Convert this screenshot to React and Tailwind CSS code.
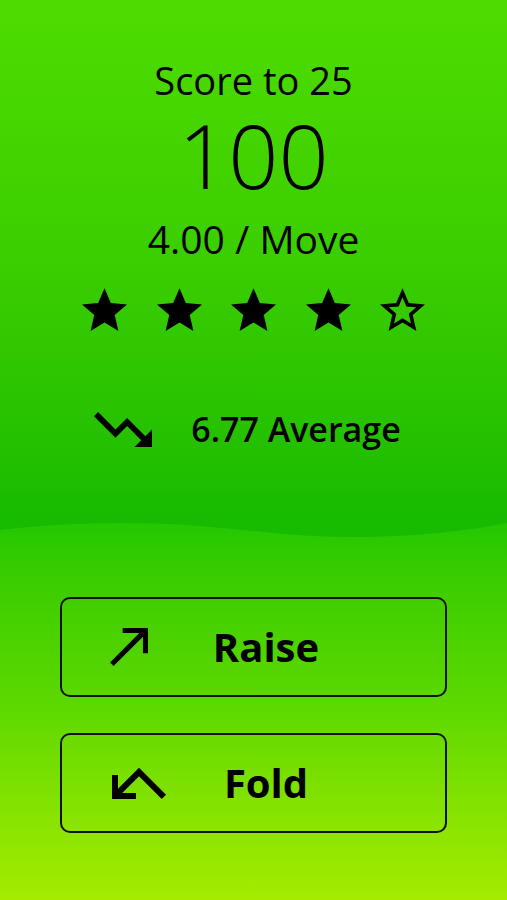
import React from 'react';

const STAR = "M12 17.27L18.18 21l-1.64-7.03L22 9.24l-7.19-.61L12 2 9.19 8.63 2 9.24l5.46 4.73L5.82 21z";
const STAR_BORDER = "M22 9.24l-7.19-.62L12 2 9.19 8.63 2 9.24l5.46 4.73L5.82 21 12 17.27 18.18 21l-1.63-7.03L22 9.24zM12 15.4l-3.76 2.27 1-4.28-3.32-2.88 4.38-.38L12 6.1l1.71 4.04 4.38.38-3.32 2.88 1 4.28L12 15.4z";

const Star = ({ filled }) => (
  <svg viewBox="2 2 20 19" className="w-[45px] h-[43px]" fill="#000">
    <path d={filled ? STAR : STAR_BORDER} />
  </svg>
);

// botones de acción
const ActionButton = ({ icon, label }) => (
  <button className="w-full h-[100px] border-2 border-[#111] rounded-[10px] flex items-center pl-[48px] pr-[83px]">
    <div className="w-[60px] flex items-center">{icon}</div>
    <span className="flex-1 text-center text-[40px] font-bold leading-[48px] text-black">{label}</span>
  </button>
);

const App = () => {
  const rating = 4;

  return (
    <div
      className="w-[507px] h-[900px] overflow-hidden flex flex-col bg-[#17bb00] text-black"
      style={{ fontFamily: '"Open Sans", "Noto Sans", sans-serif' }}
    >
      {/* PARTE SUPERIOR: puntaje */}
      <div className="h-[520px] shrink-0 bg-gradient-to-b from-[#4edc00] via-[#3bce00] to-[#17bb00] flex flex-col items-center pt-[58px]">
        <div className="text-[38px] leading-[44px]">Score to 25</div>
        <div className="mt-[9px] text-[88px] leading-[88px] font-light">100</div>
        <div className="mt-[19px] text-[39px] leading-[42px]">4.00 / Move</div>

        <div className="mt-[28px] flex gap-[29.5px]">
          {[1, 2, 3, 4, 5].map((n) => (
            <Star key={n} filled={n <= rating} />
          ))}
        </div>

        <div className="mt-[78px] w-full flex justify-center items-center gap-[39px] pr-[12px]">
          <svg viewBox="2 6 20 12" className="w-[58px] h-[35px]" fill="#000">
            <path d="M16 18l2.29-2.29-4.88-4.88-4 4L2 7.41 3.41 6l6 6 4-4 6.3 6.29L22 12v6z" />
          </svg>
          <span className="text-[34px] leading-[40px] font-semibold">6.77 Average</span>
        </div>
      </div>

      {/* PARTE INFERIOR: ola + acciones */}
      <div className="flex-1 relative bg-gradient-to-b from-[#22c700] via-[#5ed900] to-[#a4eb00]">
        <svg viewBox="0 0 507 20" className="w-[507px] h-[20px] block" preserveAspectRatio="none">
          <path d="M0 10 C50 4 130 0 200 6 C270 12 300 17 350 17 C420 17 470 10 507 3 V0 H0 Z" fill="#17bb00" />
        </svg>

        <div className="flex flex-col px-[60px] pt-[57px] gap-[36px]">
          <ActionButton
            label="Raise"
            icon={
              <svg viewBox="4 5 15 15" className="w-[38px] h-[38px]" fill="#000">
                <path d="M9 5v2h6.59L4 18.59 5.41 20 17 8.41V15h2V5z" />
              </svg>
            }
          />
          <ActionButton
            label="Fold"
            icon={
              <svg viewBox="3 7 18 10.6" className="w-[54px] h-[32px] ml-[2px] -scale-y-100" fill="#000">
                <path d="M19.59 7L12 14.59 6.41 9H11V7H3v8h2v-4.59l7 7 9-9z" />
              </svg>
            }
          />
        </div>
      </div>
    </div>
  );
};

export default App;
